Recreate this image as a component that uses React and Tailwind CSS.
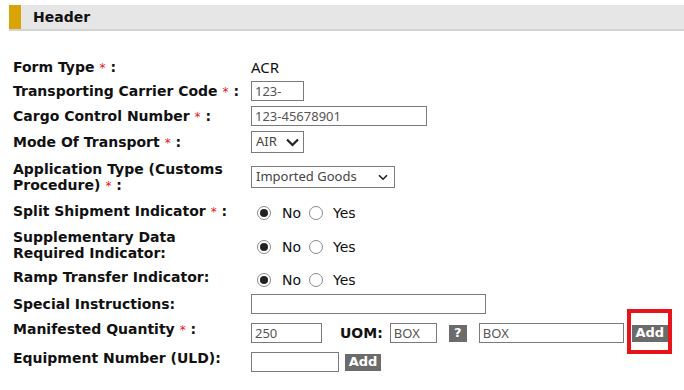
import React from 'react';

const Star = () => <span className="ml-[5px] text-[#e8141c] font-normal text-[12px] leading-[12px]">*</span>;

const Field = ({ width, value = '' }) => (
  <input
    readOnly
    value={value}
    className={`${width} h-[20px] border border-[#7a7a7a] bg-white px-[3px] text-[13px] text-[#555] font-['Noto_Sans',sans-serif] outline-none`}
  />
);

const Chevron = ({ big }) =>
  big ? (
    <svg width="13" height="9" viewBox="0 0 13 9" className="ml-auto">
      <path d="M1 1.5 L6.5 7 L12 1.5" fill="none" stroke="#222" strokeWidth="2.2" />
    </svg>
  ) : (
    <svg width="10" height="7" viewBox="0 0 10 7" className="ml-auto">
      <path d="M1 1.2 L5 5.2 L9 1.2" fill="none" stroke="#222" strokeWidth="1.6" />
    </svg>
  );

const Radio = ({ checked }) => (
  <span className="w-[14px] h-[14px] rounded-full border border-[#8a8a8a] bg-white flex items-center justify-center">
    {checked && <span className="w-[8px] h-[8px] rounded-full bg-[#222]" />}
  </span>
);

const YesNo = () => (
  <div className="flex items-center text-[14px] text-[#111] font-['DejaVu_Sans',sans-serif]">
    <Radio checked />
    <span className="ml-[11px]">No</span>
    <span className="ml-[8px]"><Radio /></span>
    <span className="ml-[10px]">Yes</span>
  </div>
);

const DarkBtn = ({ children, w }) => (
  <span className={`${w} h-[17px] bg-[#6b6b6b] text-white font-bold text-[13px] flex items-center justify-center font-['DejaVu_Sans',sans-serif]`}>
    {children}
  </span>
);

const Row = ({ h, label, children, labelCls = '', valueCls = '' }) => (
  <div className={`flex items-center ${h}`}>
    <div className={`w-[238px] shrink-0 font-bold text-[14px] leading-[16px] text-[#111] ${labelCls}`}>{label}</div>
    <div className={`flex items-center ${valueCls}`}>{children}</div>
  </div>
);

export default function App() {
  return (
    <div className="w-[684px] h-[390px] bg-white overflow-hidden font-['DejaVu_Sans',sans-serif]">
      <div className="pt-[5px] pl-[9px]">
        <div className="flex items-center h-[24px] bg-[#e6e6e6]">
          <span className="w-[12px] h-full bg-[#d9a406]" />
          <span className="ml-[12px] font-bold text-[14px] text-[#111]">Header</span>
        </div>
        <div className="h-[2px] bg-[#d3d3d3]" />
      </div>

      <div className="pl-[13px] pt-[24px]">
        <Row h="h-[24px]" label={<>Form Type<Star /> :</>}>
          <span className="text-[15px] text-[#111] font-['Noto_Sans',sans-serif]">ACR</span>
        </Row>
        <Row h="h-[23px]" label={<>Transporting Carrier Code<Star /> :</>}>
          <Field width="w-[53px]" value="123-" />
        </Row>
        <Row h="h-[28px]" label={<>Cargo Control Number<Star /> :</>}>
          <Field width="w-[176px]" value="123-45678901" />
        </Row>
        <Row h="h-[24px]" label={<>Mode Of Transport<Star /> :</>}>
          <div className="w-[53px] h-[22px] border border-[#7a7a7a] flex items-center pl-[4px] pr-[4px] text-[13px] text-[#444] font-['Noto_Sans',sans-serif]">
            AIR
            <Chevron big />
          </div>
        </Row>
        <Row h="h-[46px]" label={<>Application Type (Customs Procedure)<Star /> :</>}>
          <div className="w-[144px] h-[22px] border border-[#7a7a7a] flex items-center pl-[4px] pr-[6px] text-[13px] text-[#444] font-['Noto_Sans',sans-serif]">
            Imported Goods
            <Chevron />
          </div>
        </Row>
        <Row h="h-[22px]" label={<>Split Shipment Indicator<Star /> :</>} valueCls="mt-[4px] pl-[6px]">
          <YesNo />
        </Row>
        <Row h="h-[46px]" label="Supplementary Data Required Indicator:" valueCls="mt-[4px] pl-[6px]">
          <YesNo />
        </Row>
        <Row h="h-[18px]" label="Ramp Transfer Indicator:" valueCls="mt-[6px] pl-[6px]">
          <YesNo />
        </Row>
        <Row h="h-[36px]" label="Special Instructions:">
          <Field width="w-[235px]" value="" />
        </Row>
        <Row h="h-[18px]" label={<>Manifested Quantity<Star /> :</>} labelCls="mb-[4px]" valueCls="mt-[4px]">
          <Field width="w-[71px]" value="250" />
          <span className="ml-[18px] font-bold text-[14px] text-[#111]">UOM:</span>
          <span className="ml-[7px]"><Field width="w-[47px]" value="BOX" /></span>
          <span className="ml-[12px]"><DarkBtn w="w-[18px]">?</DarkBtn></span>
          <span className="ml-[12px]"><Field width="w-[145px]" value="BOX" /></span>
          <span className="relative ml-[8px]">
            <DarkBtn w="w-[36px]">Add</DarkBtn>
            <span className="absolute left-[-5px] top-[-16px] w-[45px] h-[45px] border-[4px] border-[#e8141c]" />
          </span>
        </Row>
        <Row h="h-[40px]" label="Equipment Number (ULD):" labelCls="mb-[4px]" valueCls="mt-[4px]">
          <Field width="w-[88px]" value="" />
          <span className="ml-[6px]"><DarkBtn w="w-[36px]">Add</DarkBtn></span>
        </Row>
      </div>
    </div>
  );
}
